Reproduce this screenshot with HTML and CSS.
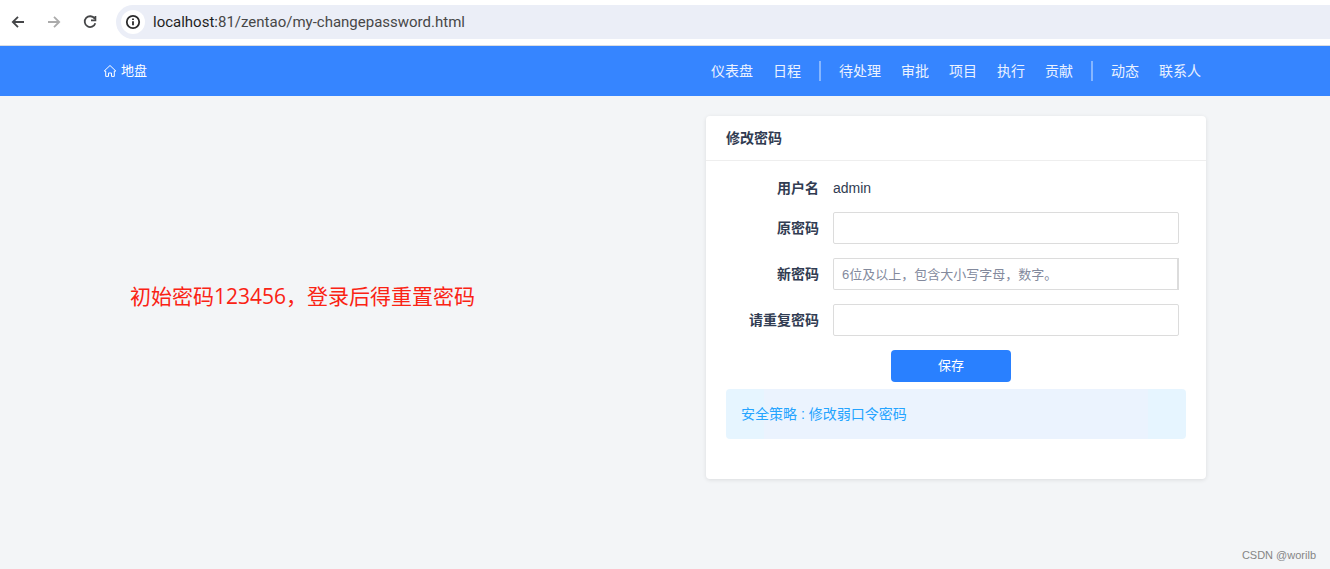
FILE: index.html
```html
<!DOCTYPE html>
<html lang="zh-CN">
<head>
<meta charset="utf-8">
<meta name="viewport" content="width=device-width, initial-scale=1">
<title>修改密码</title>
<link rel="stylesheet" href="styles.css">
</head>
<body>
<div class="browser-bar">
  <div class="browser-buttons">
    <button class="browser-button" type="button" aria-label="后退">
      <svg width="16" height="16" viewBox="0 0 16 16"><path d="M14 8H3M8 2.8 2.8 8 8 13.2"/></svg>
    </button>
    <button class="browser-button browser-button-off" type="button" aria-label="前进">
      <svg width="16" height="16" viewBox="0 0 16 16"><path d="M2 8h11M8 2.8 13.2 8 8 13.2"/></svg>
    </button>
    <button class="browser-button" type="button" aria-label="刷新">
      <svg width="16" height="16" viewBox="0 0 16 16"><path d="M12.6 4.6A5.4 5.4 0 1 0 13.3 9.2M13.4 2v4.4H9"/></svg>
    </button>
  </div>
  <div class="address">
    <span class="address-info">
      <svg width="16" height="16" viewBox="0 0 16 16"><circle cx="8" cy="8" r="6.2"/><path d="M8 7.3v4M8 4.5v1.6"/></svg>
    </span>
    <span class="address-url"><span class="address-host">localhost:</span>81/zentao/my-changepassword.html</span>
  </div>
</div>

<header class="site-header">
  <a class="home" href="#">
    <svg width="14" height="14" viewBox="0 0 14 14"><path d="M2.7 7H1.2L7 1.5 12.8 7h-1.5v5.4H8.5V9h-3v3.4H2.7z"/></svg>
    <span>地盘</span>
  </a>
  <nav class="nav">
    <a href="#">仪表盘</a>
    <a href="#">日程</a>
    <span class="nav-divider"></span>
    <a href="#">待处理</a>
    <a href="#">审批</a>
    <a href="#">项目</a>
    <a href="#">执行</a>
    <a href="#">贡献</a>
    <span class="nav-divider"></span>
    <a href="#">动态</a>
    <a href="#">联系人</a>
  </nav>
</header>

<main class="main">
  <p class="note">初始密码123456，登录后得重置密码</p>
  <section class="card">
    <h1 class="card-title">修改密码</h1>
    <form class="form">
      <div class="form-row">
        <span class="form-label">用户名</span>
        <span>admin</span>
      </div>
      <div class="form-row">
        <label class="form-label" for="old-password">原密码</label>
        <input class="form-input" id="old-password" type="password">
      </div>
      <div class="form-row">
        <label class="form-label" for="new-password">新密码</label>
        <input class="form-input form-input-strength" id="new-password" type="password" placeholder="6位及以上，包含大小写字母，数字。">
      </div>
      <div class="form-row">
        <label class="form-label" for="repeat-password">请重复密码</label>
        <input class="form-input" id="repeat-password" type="password">
      </div>
      <button class="save" type="submit">保存</button>
    </form>
    <p class="alert">安全策略 : 修改弱口令密码</p>
  </section>
</main>
<footer class="credit">CSDN @worilb</footer>
</body>
</html>
```

FILE: styles.css
```css
* {
  box-sizing: border-box;
}

body {
  display: flex;
  flex-direction: column;
  min-height: 100vh;
  margin: 0;
  background: #f3f5f7;
  color: #313c52;
  font: 14px/20px "Liberation Sans", "Noto Sans CJK SC", sans-serif;
}

svg {
  display: block;
  fill: none;
  stroke: currentColor;
}

a {
  color: inherit;
  text-decoration: none;
}

.browser-bar {
  display: flex;
  align-items: center;
  gap: 18px;
  padding: 5px 0 6px 10px;
  border-bottom: 1px solid #dadde2;
  background: #fff;
}

.browser-buttons {
  display: flex;
  gap: 20px;
}

.browser-button {
  padding: 0;
  border: 0;
  background: none;
  color: #454648;
  stroke-width: 1.8;
}

.browser-button-off {
  color: #ababab;
}

.address {
  display: flex;
  flex: 1;
  align-items: center;
  gap: 8px;
  height: 34px;
  padding-left: 5px;
  border-radius: 17px 0 0 17px;
  background: #ebeef7;
  color: #474747;
  font: 15px/20px Roboto, sans-serif;
}

.address-info {
  padding: 4px;
  border-radius: 50%;
  background: #fff;
  color: #2b2b2b;
  stroke-width: 1.8;
}

.address-host {
  color: #1f1f1f;
}

.site-header {
  display: flex;
  align-items: center;
  justify-content: space-between;
  height: 50px;
  padding: 0 129px 0 103px;
  background: #3685ff;
  color: #fff;
}

.home {
  display: flex;
  align-items: center;
  gap: 4px;
  font-size: 13px;
}

.nav {
  display: flex;
  align-items: center;
  gap: 20px;
  color: #ebf2ff;
}

.nav-divider {
  width: 2px;
  height: 20px;
  margin: 0 -2px;
  background: #86b6ff;
}

.main {
  display: flex;
  flex: 1;
  align-items: flex-start;
  justify-content: space-between;
  padding: 20px 124px 0 130px;
}

.note {
  margin: 165px 0 0;
  color: #fa2314;
  font: 21px/30px "Open Sans", "Noto Sans CJK SC", sans-serif;
}

.card {
  width: 500px;
  padding-bottom: 40px;
  border-radius: 4px;
  background: #fff;
  box-shadow: 0 1px 4px rgba(0, 0, 0, 0.1);
}

.card-title {
  margin: 0;
  padding: 12px 20px;
  border-bottom: 1px solid #eee;
  font-size: 14px;
  line-height: 20px;
}

.form {
  display: flex;
  flex-direction: column;
  gap: 14px;
  padding: 17px 27px 7px 20px;
}

.form-row {
  display: grid;
  grid-template-columns: 93px 1fr;
  align-items: center;
  gap: 14px;
}

.form-label {
  font-weight: 700;
  text-align: right;
}

.form-input {
  width: 100%;
  height: 32px;
  padding: 0 8px;
  border: 1px solid #dcdcdc;
  border-radius: 2px;
  background: #fff;
  color: inherit;
  font: inherit;
  font-size: 13px;
}

.form-input-strength {
  border-right-width: 2px;
  border-radius: 2px 0 0 2px;
}

.form-input::placeholder {
  color: #838a9d;
}

.save {
  width: 120px;
  height: 32px;
  margin-left: 165px;
  padding: 0;
  border: 0;
  border-radius: 4px;
  background: #2980ff;
  color: #fff;
  font: inherit;
  font-size: 13px;
}

.alert {
  margin: 0 20px;
  padding: 15px;
  border-radius: 4px;
  background: linear-gradient(90deg, #e6f5ff 38px, #ebf3fe 38px, #ebf3fe calc(100% - 38px), #e6f5ff calc(100% - 38px));
  color: #25a4ff;
}

.credit {
  padding: 0 14px 4px;
  color: #858585;
  font-size: 11px;
  text-align: right;
}
```
